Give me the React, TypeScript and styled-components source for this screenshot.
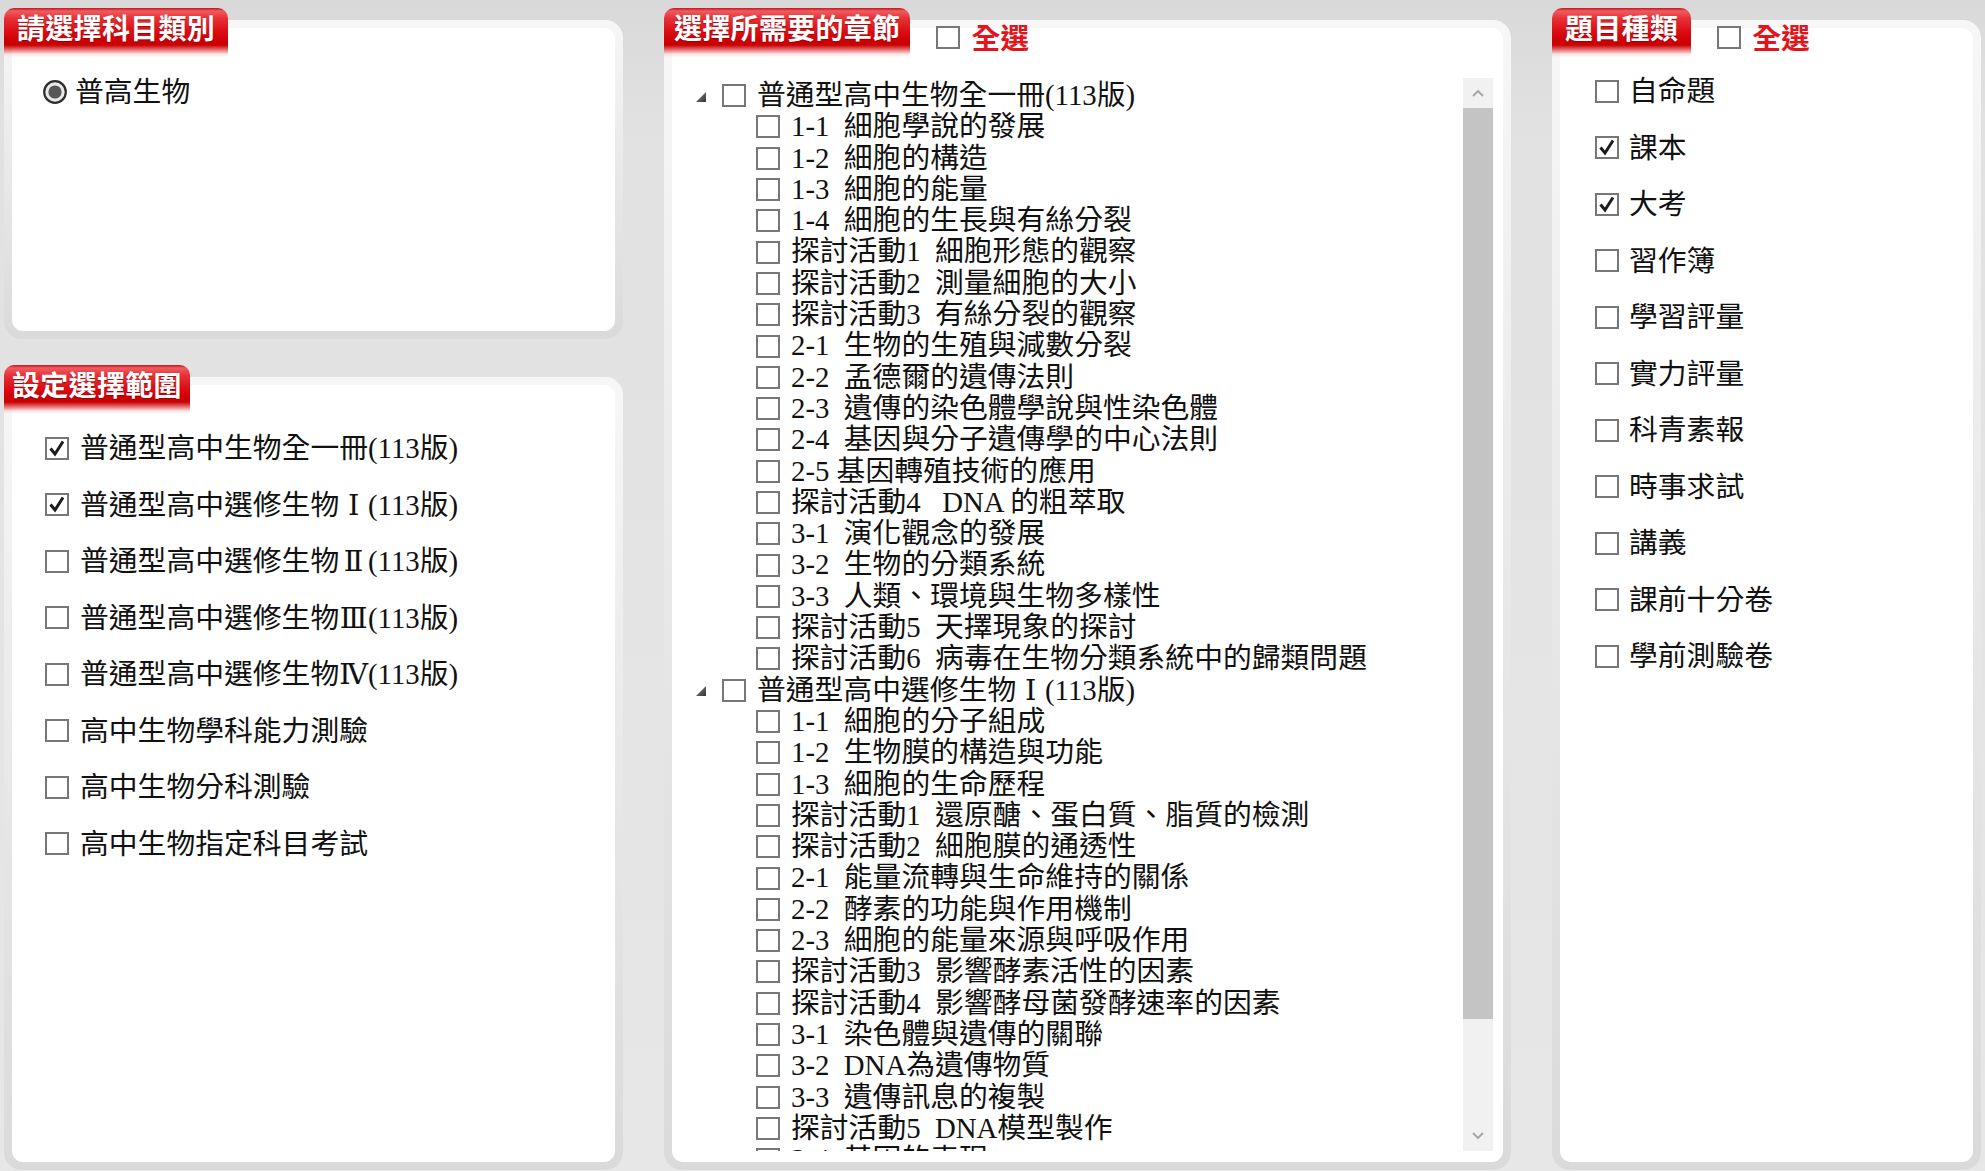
import React from "react";
import styled, { createGlobalStyle } from "styled-components";

/* ---------- data ---------- */

type Choice = { label: React.ReactNode; checked?: boolean };
type Chapter = { label: string };
type Book = { title: React.ReactNode; chapters: Chapter[] };

const GlobalStyle = createGlobalStyle`
  html, body {
    margin: 0;
    padding: 0;
    background: #e6e6e6;
  }
  body {
    font-family: "Liberation Serif", "Noto Sans CJK TC", serif;
    color: #111;
    overflow: hidden;
  }
`;

const Numeral = styled.span`
  display: inline-block;
  width: 1em;
  text-align: center;
  font-family: "Liberation Serif", "DejaVu Serif", "Noto Sans CJK TC", serif;
`;

const ranges: Choice[] = [
  { label: "普通型高中生物全一冊(113版)", checked: true },
  {
    label: (
      <>
        普通型高中選修生物<Numeral>Ⅰ</Numeral>(113版)
      </>
    ),
    checked: true,
  },
  {
    label: (
      <>
        普通型高中選修生物<Numeral>Ⅱ</Numeral>(113版)
      </>
    ),
  },
  {
    label: (
      <>
        普通型高中選修生物<Numeral>Ⅲ</Numeral>(113版)
      </>
    ),
  },
  {
    label: (
      <>
        普通型高中選修生物<Numeral>Ⅳ</Numeral>(113版)
      </>
    ),
  },
  { label: "高中生物學科能力測驗" },
  { label: "高中生物分科測驗" },
  { label: "高中生物指定科目考試" },
];

const sources: Choice[] = [
  { label: "自命題" },
  { label: "課本", checked: true },
  { label: "大考", checked: true },
  { label: "習作簿" },
  { label: "學習評量" },
  { label: "實力評量" },
  { label: "科青素報" },
  { label: "時事求試" },
  { label: "講義" },
  { label: "課前十分卷" },
  { label: "學前測驗卷" },
];

const books: Book[] = [
  {
    title: "普通型高中生物全一冊(113版)",
    chapters: [
      { label: "1-1  細胞學說的發展" },
      { label: "1-2  細胞的構造" },
      { label: "1-3  細胞的能量" },
      { label: "1-4  細胞的生長與有絲分裂" },
      { label: "探討活動1  細胞形態的觀察" },
      { label: "探討活動2  測量細胞的大小" },
      { label: "探討活動3  有絲分裂的觀察" },
      { label: "2-1  生物的生殖與減數分裂" },
      { label: "2-2  孟德爾的遺傳法則" },
      { label: "2-3  遺傳的染色體學說與性染色體" },
      { label: "2-4  基因與分子遺傳學的中心法則" },
      { label: "2-5 基因轉殖技術的應用" },
      { label: "探討活動4   DNA 的粗萃取" },
      { label: "3-1  演化觀念的發展" },
      { label: "3-2  生物的分類系統" },
      { label: "3-3  人類、環境與生物多樣性" },
      { label: "探討活動5  天擇現象的探討" },
      { label: "探討活動6  病毒在生物分類系統中的歸類問題" },
    ],
  },
  {
    title: (
      <>
        普通型高中選修生物<Numeral>Ⅰ</Numeral>(113版)
      </>
    ),
    chapters: [
      { label: "1-1  細胞的分子組成" },
      { label: "1-2  生物膜的構造與功能" },
      { label: "1-3  細胞的生命歷程" },
      { label: "探討活動1  還原醣、蛋白質、脂質的檢測" },
      { label: "探討活動2  細胞膜的通透性" },
      { label: "2-1  能量流轉與生命維持的關係" },
      { label: "2-2  酵素的功能與作用機制" },
      { label: "2-3  細胞的能量來源與呼吸作用" },
      { label: "探討活動3  影響酵素活性的因素" },
      { label: "探討活動4  影響酵母菌發酵速率的因素" },
      { label: "3-1  染色體與遺傳的關聯" },
      { label: "3-2  DNA為遺傳物質" },
      { label: "3-3  遺傳訊息的複製" },
      { label: "探討活動5  DNA模型製作" },
      { label: "3-4  基因的表現" },
      { label: "3-5  基因表現的調控" },
    ],
  },
];

/* ---------- layout ---------- */

const FONT_SIZE = 28.8;

const Page = styled.main`
  box-sizing: border-box;
  height: 1171px;
  padding: 20px 4px 1px;
  display: grid;
  grid-template-columns: 619px 847px 429px;
  column-gap: 41px;
  background: linear-gradient(to bottom, #d9d9d9 0px, #e1e1e1 120px, #e7e7e7 100%);
`;

const Column = styled.div`
  display: flex;
  flex-direction: column;
  gap: 38px;
  min-height: 0;
`;

const Panel = styled.section<{ $height?: number }>`
  position: relative;
  box-sizing: border-box;
  padding: 8px;
  border-radius: 18px;
  background: linear-gradient(to bottom, #f7f7f7 0%, #ececec 35%, #dadada 100%);
  min-height: 0;
  ${(p) => (p.$height ? `height: ${p.$height}px; flex: none;` : `flex: 1;`)}
`;

const Sheet = styled.div`
  box-sizing: border-box;
  height: 100%;
  background: #fff;
  border-radius: 11px;
`;

/* header ribbon that sits over the panel frame */
const Head = styled.header`
  position: absolute;
  top: -12px;
  left: 0;
  display: flex;
  align-items: flex-start;
  z-index: 1;
`;

const Tab = styled.h2<{ $pad: number }>`
  margin: 0;
  box-sizing: border-box;
  height: 49px;
  padding: 0 ${(p) => p.$pad}px;
  border-radius: 10px 10px 0 0;
  background: linear-gradient(
    to bottom,
    #c8141a 0px,
    #ee5c60 3px,
    #e83238 10px,
    #dc1117 22px,
    #d00006 32px,
    #c90000 37px,
    rgba(214, 30, 34, 0.6) 42px,
    rgba(240, 150, 150, 0.25) 46px,
    rgba(255, 255, 255, 0) 49px
  );
  color: #fff;
  font-family: "Noto Sans CJK TC", sans-serif;
  font-weight: 700;
  font-size: 28px;
  line-height: 38px;
  letter-spacing: 0.3px;
  text-shadow: 0 1px 1px rgba(100, 0, 0, 0.55);
  white-space: nowrap;
`;

const SelectAll = styled.label`
  display: flex;
  align-items: center;
  gap: 11px;
  height: 32px;
  margin: 13px 0 0 26px;
`;

const RedLabel = styled.span`
  color: #e3141c;
  font-family: "Noto Sans CJK TC", sans-serif;
  font-weight: 700;
  font-size: ${FONT_SIZE}px;
  line-height: 32px;
`;

/* ---------- check boxes & radios ---------- */

const Box = styled.span`
  box-sizing: border-box;
  flex: none;
  width: 24px;
  height: 23px;
  border: 2px solid #777;
  background: #fff;
  display: inline-flex;
  align-items: center;
  justify-content: center;
`;

const CheckBox = ({ checked }: { checked?: boolean }) => (
  <Box>
    {checked && (
      <svg width="20" height="19" viewBox="0 0 20 19">
        <polyline
          points="3.5,9.5 8,15 16,2.5"
          fill="none"
          stroke="#1c1c1c"
          strokeWidth="3"
          strokeLinejoin="miter"
        />
      </svg>
    )}
  </Box>
);

const RadioDot = () => (
  <svg width="24" height="24" viewBox="0 0 24 24" style={{ flex: "none" }}>
    <circle cx="12" cy="12" r="10.8" fill="#e9e9e9" stroke="#2e2e2e" strokeWidth="2.2" />
    <circle cx="12" cy="12" r="6.6" fill="#575757" />
  </svg>
);

/* ---------- option lists ---------- */

const OptionList = styled.ul<{ $top: number; $left: number }>`
  list-style: none;
  margin: 0;
  padding: ${(p) => p.$top}px 0 0 ${(p) => p.$left}px;
`;

const OptionRow = styled.li<{ $gap?: number }>`
  display: flex;
  align-items: center;
  gap: ${(p) => p.$gap ?? 10}px;
  height: 56.5px;
`;

const OptionText = styled.span`
  font-size: ${FONT_SIZE}px;
  line-height: 34px;
  white-space: nowrap;
`;

/* ---------- chapter tree ---------- */

const TreeBody = styled.div`
  box-sizing: border-box;
  height: 100%;
  display: flex;
  padding: 50px 10px 11px 0;
`;

const TreeViewport = styled.ul`
  flex: 1;
  min-width: 0;
  overflow: hidden;
  list-style: none;
  margin: 0;
  padding: 2px 0 0 24px;
`;

const TreeRow = styled.li<{ $child?: boolean }>`
  display: flex;
  align-items: center;
  height: 31.3px;
  padding-left: ${(p) => (p.$child ? 60 : 0)}px;
`;

const Toggle = () => (
  <svg width="10" height="10" viewBox="0 0 10 10" style={{ flex: "none", marginRight: 16, marginTop: 2 }}>
    <defs>
      <linearGradient id="tg" x1="0" y1="0" x2="1" y2="1">
        <stop offset="0" stopColor="#8a8a8a" />
        <stop offset="1" stopColor="#333" />
      </linearGradient>
    </defs>
    <polygon points="10,0 10,10 0,10" fill="url(#tg)" />
  </svg>
);

const NodeText = styled.span`
  margin-left: 11px;
  font-size: ${FONT_SIZE}px;
  line-height: 31.3px;
  white-space: pre;
`;

const ScrollRail = styled.div`
  flex: none;
  width: 30px;
  display: flex;
  flex-direction: column;
  background: #f1f1f1;
`;

const RailButton = styled.div`
  flex: none;
  height: 30px;
  display: flex;
  align-items: center;
  justify-content: center;
`;

const RailThumb = styled.div<{ $size: number }>`
  flex: none;
  height: ${(p) => p.$size}px;
  background: #c4c4c4;
`;

const RailGap = styled.div`
  flex: 1;
`;

const Chevron = ({ up }: { up?: boolean }) => (
  <svg width="12" height="8" viewBox="0 0 12 8">
    <polyline
      points={up ? "1,7 6,2 11,7" : "1,1 6,6 11,1"}
      fill="none"
      stroke="#a3a3a3"
      strokeWidth="1.8"
    />
  </svg>
);

/* ---------- page ---------- */

export default function App() {
  return (
    <>
      <GlobalStyle />
      <Page>
        <Column>
          <Panel $height={319}>
            <Head>
              <Tab $pad={13}>請選擇科目類別</Tab>
            </Head>
            <Sheet>
              <OptionList $top={36} $left={31}>
                <OptionRow $gap={8}>
                  <RadioDot />
                  <OptionText>普高生物</OptionText>
                </OptionRow>
              </OptionList>
            </Sheet>
          </Panel>

          <Panel>
            <Head>
              <Tab $pad={8}>設定選擇範圍</Tab>
            </Head>
            <Sheet>
              <OptionList $top={35} $left={33}>
                {ranges.map((r, i) => (
                  <OptionRow key={i} $gap={11}>
                    <CheckBox checked={r.checked} />
                    <OptionText>{r.label}</OptionText>
                  </OptionRow>
                ))}
              </OptionList>
            </Sheet>
          </Panel>
        </Column>

        <Panel>
          <Head>
            <Tab $pad={10}>選擇所需要的章節</Tab>
            <SelectAll>
              <CheckBox />
              <RedLabel>全選</RedLabel>
            </SelectAll>
          </Head>
          <Sheet>
            <TreeBody>
              <TreeViewport>
                {books.map((b, i) => (
                  <React.Fragment key={i}>
                    <TreeRow>
                      <Toggle />
                      <CheckBox />
                      <NodeText>{b.title}</NodeText>
                    </TreeRow>
                    {b.chapters.map((c, j) => (
                      <TreeRow key={j} $child>
                        <CheckBox />
                        <NodeText>{c.label}</NodeText>
                      </TreeRow>
                    ))}
                  </React.Fragment>
                ))}
              </TreeViewport>
              <ScrollRail>
                <RailButton>
                  <Chevron up />
                </RailButton>
                <RailThumb $size={911} />
                <RailGap />
                <RailButton>
                  <Chevron />
                </RailButton>
              </ScrollRail>
            </TreeBody>
          </Sheet>
        </Panel>

        <Panel>
          <Head>
            <Tab $pad={13}>題目種類</Tab>
            <SelectAll>
              <CheckBox />
              <RedLabel>全選</RedLabel>
            </SelectAll>
          </Head>
          <Sheet>
            <OptionList $top={35} $left={35}>
              {sources.map((s, i) => (
                <OptionRow key={i}>
                  <CheckBox checked={s.checked} />
                  <OptionText>{s.label}</OptionText>
                </OptionRow>
              ))}
            </OptionList>
          </Sheet>
        </Panel>
      </Page>
    </>
  );
}
